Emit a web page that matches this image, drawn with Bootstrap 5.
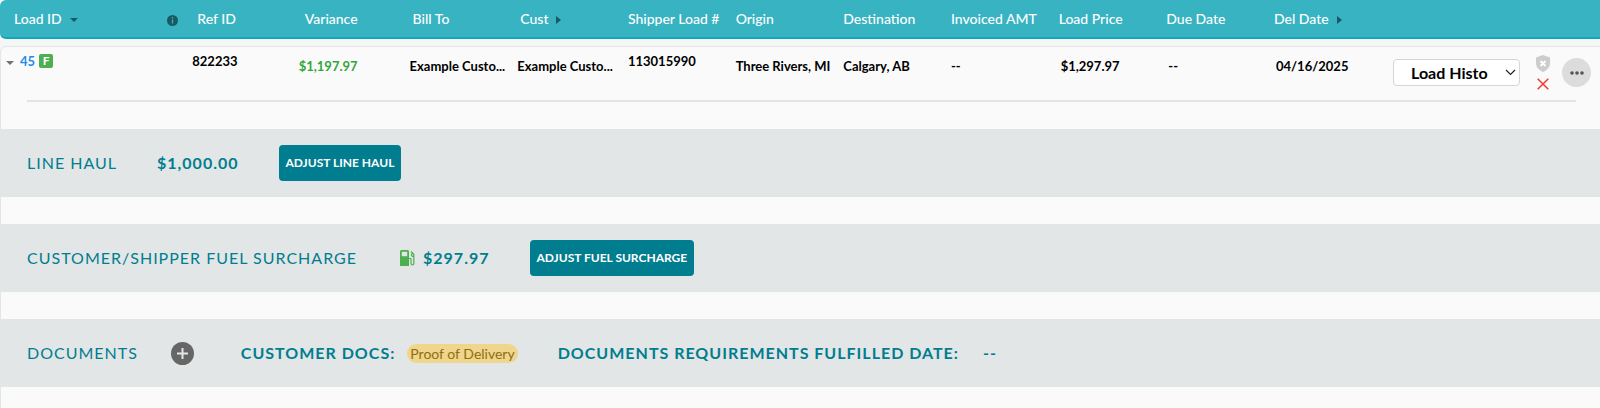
<!DOCTYPE html>
<html lang="en">
<head>
<meta charset="utf-8">
<meta name="viewport" content="width=device-width, initial-scale=1">
<title>Loads</title>
<link href="https://cdn.jsdelivr.net/npm/bootstrap@5.3.0/dist/css/bootstrap.min.css" rel="stylesheet">
<style>
:root { --line: #e2e6e6; --teal: #007d8f; }
body { font-family: Lato, "Liberation Sans", sans-serif; background: #f5f7f6; color: #000; font-size: 13px; line-height: 20px; }
.loads { table-layout: fixed; border-collapse: separate; border-spacing: 0; }
.col-load { width: 11.83%; }
.col-data { width: 6.73%; }
.loads th { background: #37b3c2; color: #fff; font-weight: 500; font-size: 14px; height: 39px; padding: 0 0 0 8px; border-bottom: 2px solid #0fa9b9; white-space: nowrap; vertical-align: middle; }
.loads th:first-child { border-radius: 6px 0 0 6px; padding: 0 11px 0 14px; }
.loads thead::after { content: ""; display: table-row; height: 7px; }
.loads .main-row td { background: #fafafa; border-top: 1px solid var(--line); height: 54px; padding: 9px 0 0 5px; font-weight: 700; vertical-align: top; white-space: nowrap; }
.loads .main-row td.mid { padding-left: 8px; }
.loads .main-row td.far { padding-left: 10px; }
.loads .main-row td.raised { padding-top: 4px; }
.loads .main-row td.ref { padding-left: 3px; }
.loads .main-row td:first-child { border-left: 1px solid var(--line); border-top-left-radius: 6px; padding: 4px 0 0 5px; }
.loads .main-row td.tools { padding: 8px 9px 0 0; }
.loads tr .amount { text-align: right; padding-left: 0 !important; padding-right: 47px !important; }
.gain { color: #33a63b; }
.detail { background: #fafafa; border-left: 1px solid var(--line); padding: 0; }
.rule { border: 0; border-top: 2px solid #e3e5e5; opacity: 1; margin: 0 24px 27px 26px; }
.band { background: var(--line); min-height: 68px; padding: 0 26px; margin-bottom: 27px; color: var(--teal); font-size: 16px; letter-spacing: 1px; }
.band-value { margin: 0 40px; font-weight: 700; }
.requirements { margin-right: 24px; }
.fuel { gap: 8px; margin-left: 43px; }
.tri-down { border: 4px solid transparent; border-top-color: currentColor; border-bottom: 0; }
.tri-right { border: 4px solid transparent; border-left: 5px solid currentColor; border-right: 0; }
.sorter { color: #1b5962; margin: 2px 0 0 8px; }
.flag { background: #4caf50; color: #fff; width: 14px; height: 14px; line-height: 14px; border-radius: 2px; text-align: center; font-weight: 700; font-size: 12px; }
.load-link { color: #1e8ce8; text-decoration: none; margin: 0 4px 0 6px; }
.history { --bs-form-select-bg-img: url("data:image/svg+xml,%3csvg xmlns='http://www.w3.org/2000/svg' viewBox='0 0 11 11'%3e%3cpath fill='none' stroke='%23222' stroke-width='1.2' d='M1 3l4.500 4.500L10 3'/%3e%3c/svg%3e"); background-image: var(--bs-form-select-bg-img); width: 127px; height: 27px; padding: 0 31px 0 17px; font-size: 16px; line-height: 24px; font-weight: 700; color: #000; text-overflow: clip; border: 1px solid #d5d5d5; border-radius: 4px; background-position: right 3px center; background-size: 11px 11px; }
.marks { gap: 6px; margin: 0 12px 0 16px; }
.bare { border: 0; background: none; padding: 0; display: flex; }
.more { width: 29px; height: 29px; border-radius: 50%; background: #dcdcdc; align-items: center; justify-content: center; }
.add { margin: 0 47px 0 33px; }
.adjust { background: var(--teal); color: #fff; font-weight: 700; font-size: 12px; height: 36px; padding: 0 7px; border: 0; border-radius: 4px; letter-spacing: 0; }
.adjust:hover { background: #006a79; color: #fff; }
.doc-pill { background: #f0d58c; color: #8f6f10; font-size: 14px; letter-spacing: 0; line-height: 19px; border-radius: 10px; padding: 0 3px; margin-left: 12px; }
</style>
</head>
<body>
<table class="loads w-100">
  <colgroup>
    <col class="col-load"><col class="col-data"><col class="col-data"><col class="col-data"><col class="col-data"><col class="col-data"><col class="col-data"><col class="col-data"><col class="col-data"><col class="col-data"><col class="col-data"><col class="col-data"><col>
  </colgroup>
  <thead>
    <tr>
      <th scope="col"><div class="d-flex align-items-center"><span>Load ID</span><span class="tri-down sorter"></span>
        <svg class="ms-auto mt-1" width="11" height="11" viewBox="0 0 11 11" aria-label="Info"><circle cx="5.500" cy="5.500" r="5.500" fill="#1b5962"/><path d="M5.500 2v1.500M5.500 4.600v4" stroke="#37b3c2" stroke-width="1.300"/></svg></div></th>
      <th scope="col">Ref ID</th>
      <th scope="col" class="amount">Variance</th>
      <th scope="col">Bill To</th>
      <th scope="col"><div class="d-flex align-items-center"><span>Cust</span><span class="tri-right sorter"></span></div></th>
      <th scope="col">Shipper Load #</th>
      <th scope="col">Origin</th>
      <th scope="col">Destination</th>
      <th scope="col">Invoiced AMT</th>
      <th scope="col">Load Price</th>
      <th scope="col">Due Date</th>
      <th scope="col"><div class="d-flex align-items-center"><span>Del Date</span><span class="tri-right sorter"></span></div></th>
      <th></th>
    </tr>
  </thead>
  <tbody>
    <tr class="main-row">
      <td><div class="d-flex align-items-center"><span class="tri-down text-secondary mt-1"></span><a class="load-link" href="#">45</a><span class="flag">F</span></div></td>
      <td class="raised ref">822233</td>
      <td class="amount gain">$1,197.97</td>
      <td>Example Custo...</td>
      <td>Example Custo...</td>
      <td class="raised mid">113015990</td>
      <td class="mid">Three Rivers, MI</td>
      <td class="mid">Calgary, AB</td>
      <td class="mid">--</td>
      <td class="far">$1,297.97</td>
      <td class="far">--</td>
      <td class="far">04/16/2025</td>
      <td class="tools">
        <div class="d-flex align-items-center justify-content-end">
          <select class="form-select history" aria-label="Load action"><option>Load History</option></select>
          <div class="marks d-flex flex-column align-items-center">
            <button class="bare" aria-label="Shield"><svg width="14" height="17" viewBox="0 0 14 17"><path d="M7 0l7 2.500v5.500c0 4-2.500 7-7 9c-4.500-2-7-5-7-9V2.500z" fill="#ccc"/><path d="M4.500 6l5 5M9.500 6l-5 5" stroke="#fff" stroke-width="1.800"/></svg></button>
            <button class="bare" aria-label="Remove"><svg width="12" height="12" viewBox="0 0 12 12"><path d="M.7.7l10.600 10.600M11.300.7L.7 11.300" stroke="#f03a2c" stroke-width="1.500"/></svg></button>
          </div>
          <button class="bare more" aria-label="More"><svg width="14" height="4" viewBox="0 0 14 4" fill="#555"><circle cx="2" cy="2" r="1.800"/><circle cx="7" cy="2" r="1.800"/><circle cx="12" cy="2" r="1.800"/></svg></button>
        </div>
      </td>
    </tr>
    <tr>
      <td colspan="13" class="detail">
        <hr class="rule">
        <section class="band d-flex align-items-center">
          <span>LINE HAUL</span><span class="band-value">$1,000.00</span><button class="btn adjust">ADJUST LINE HAUL</button>
        </section>
        <section class="band d-flex align-items-center">
          <span>CUSTOMER/SHIPPER FUEL SURCHARGE</span>
          <span class="band-value fuel d-flex align-items-center"><svg width="15" height="16" viewBox="0 0 15 16"><path fill="#4caf50" fill-rule="evenodd" d="M1.500 0h6Q9 0 9 1.500V16H0V1.500Q0 0 1.500 0zM1.800 1.800v4.400h5.400V1.800z"/><path d="M9 8.500h1.300q.7 0 .7.700v4.300q0 1.500 1.400 1.500t1.400-1.500V4.300L11 1.500M13.800 6.300h-1.500q-.9-.3-.9-1.200t.9-1.500" fill="none" stroke="#4caf50" stroke-width="1.200"/></svg>$297.97</span>
          <button class="btn adjust">ADJUST FUEL SURCHARGE</button>
        </section>
        <section class="band d-flex align-items-center">
          <span>DOCUMENTS</span>
          <button class="bare add" aria-label="Add document"><svg width="23" height="23" viewBox="0 0 23 23"><circle cx="11.500" cy="11.500" r="11.500" fill="#666"/><path d="M11.500 6v11M6 11.500h11" stroke="#e2e6e6" stroke-width="2"/></svg></button>
          <span class="fw-bold">CUSTOMER DOCS:</span><span class="doc-pill">Proof of Delivery</span>
          <span class="band-value requirements">DOCUMENTS REQUIREMENTS FULFILLED DATE:</span><span class="fw-bold">--</span>
        </section>
      </td>
    </tr>
  </tbody>
</table>
<script src="https://cdn.jsdelivr.net/npm/bootstrap@5.3.0/dist/js/bootstrap.bundle.min.js"></script>
</body>
</html>
